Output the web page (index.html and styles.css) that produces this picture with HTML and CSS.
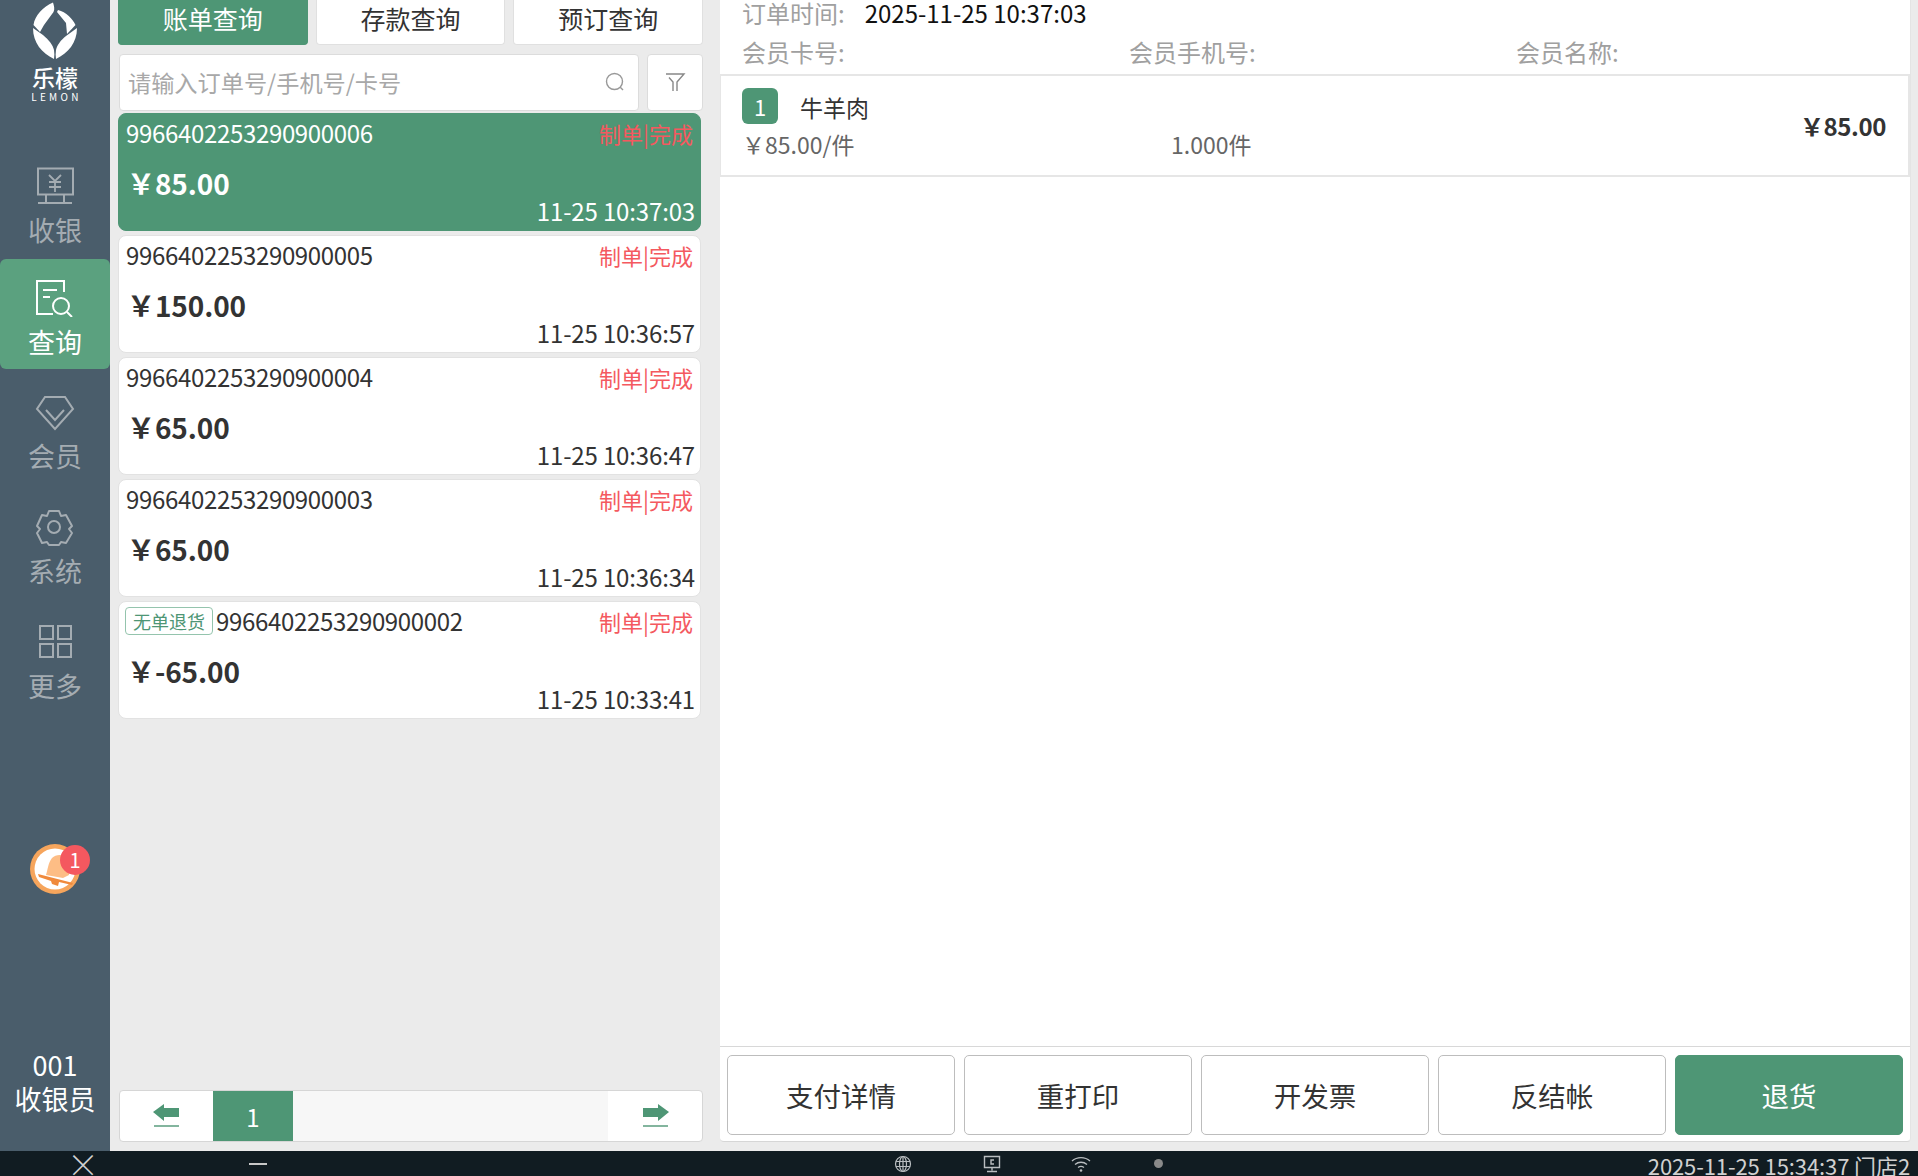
FILE: index.html
```html
<!DOCTYPE html>
<html lang="zh-CN">
<head>
<meta charset="utf-8">
<title>乐檬</title>
<link rel="stylesheet" href="styles.css">
</head>
<body>
<div class="app">
  <div class="main">
    <nav class="side">
      <div class="logo">
        <svg class="logo-mark" viewBox="0 0 44 58" width="44" height="58"><path fill="#fff" d="M20 1.500C21 5 22 8 20.500 11L11 24 7 31 .5 24C2 14 10 6 20 1.500zM25 9C33 11 40 18 42.500 24L34 33 33 22 24 11zM0 27l10 7c6 5 10 10 11 15 .5 3 .5 6 0 9C9 52 0 42 0 27zM44 27C44 42 35 52 23 58c-.5-3-.5-6 0-9 1-5 5-10 10-14z"/></svg>
        <div class="logo-cn">乐檬</div>
        <div class="logo-en">LEMON</div>
      </div>
      <a class="nav-item nav-first">
        <svg viewBox="0 0 40 38" width="40" height="38" fill="none" stroke="#a4acb2" stroke-width="2"><path d="M3 1.500h35v26H3zM11 28v7M29 28v7M3 36h34"/><path d="M14 8l6 6 6-6M14 15h12M14 20h12M20 14v11" stroke-width="1.800"/></svg>
        <span>收银</span>
      </a>
      <a class="nav-item active">
        <svg viewBox="0 0 40 38" width="40" height="38" fill="none" stroke="#fff" stroke-width="2"><path d="M29 13V2H2v33h16M8 11h14M8 18h7"/><circle cx="26" cy="27" r="8"/><path d="M32 33l5 5"/></svg>
        <span>查询</span>
      </a>
      <a class="nav-item nav-after">
        <svg viewBox="0 0 40 36" width="40" height="36" fill="none" stroke="#a4acb2" stroke-width="2"><path d="M10 2h20l8 12-18 20L2 14zM11 15l9 10 9-10"/></svg>
        <span>会员</span>
      </a>
      <a class="nav-item">
        <svg viewBox="0 0 40 38" width="40" height="38" fill="none" stroke="#a4acb2" stroke-width="2"><path d="M14 3h10l2 5 5-1 6 11-3 3 3 4-6 10-5-1-2 3H14l-2-3-5 1-5-10 3-4-3-3L7 7l5 1z" stroke-linejoin="round"/><circle cx="19" cy="19" r="6"/></svg>
        <span>系统</span>
      </a>
      <a class="nav-item">
        <svg viewBox="0 0 40 38" width="40" height="38" fill="none" stroke="#a4acb2" stroke-width="2"><path d="M5 3h13v13H5zM23 3h13v13H23zM5 21h13v13H5zM23 21h13v13H23z"/></svg>
        <span>更多</span>
      </a>
      <div class="bell-wrap">
        <svg class="bell" viewBox="0 0 50 50" width="50" height="50"><circle cx="25" cy="25" r="25" fill="#f6a55c"/><circle cx="25" cy="25" r="20.500" fill="#fff"/><path fill="#fdbd85" d="M16 31c2-6 2-12 6-17 4-4 11-4 15 0 3 4 2 11 2 17l-6 3z"/><path fill="#f08a3c" d="M8 30l35 9-1 2-13-3-1 4-6-2-1-3L9 33z"/></svg>
        <span class="badge">1</span>
      </div>
      <div class="user">
        <div>001</div>
        <div>收银员</div>
      </div>
    </nav>

    <section class="list-col">
      <div class="tabs">
        <div class="tab on">账单查询</div>
        <div class="tab">存款查询</div>
        <div class="tab">预订查询</div>
      </div>
      <div class="search-row">
        <div class="search">
          <span class="placeholder">请输入订单号/手机号/卡号</span>
          <svg viewBox="0 0 22 22" width="22" height="22" fill="none" stroke="#999" stroke-width="1.400"><circle cx="10.500" cy="10.500" r="8"/><path d="M16 16l3 3"/></svg>
        </div>
        <div class="filter">
          <svg viewBox="0 0 22 22" width="22" height="22" fill="none" stroke="#888" stroke-width="1.400"><path d="M2 3h18l-7 8v9M9 20v-9L5 6.500"/></svg>
        </div>
      </div>
      <div class="cards">
        <article class="card sel">
          <div class="card-top"><span class="no">9966402253290900006</span><span class="state">制单|完成</span></div>
          <div class="amount">￥85.00</div>
          <div class="time">11-25 10:37:03</div>
        </article>
        <article class="card">
          <div class="card-top"><span class="no">9966402253290900005</span><span class="state">制单|完成</span></div>
          <div class="amount">￥150.00</div>
          <div class="time">11-25 10:36:57</div>
        </article>
        <article class="card">
          <div class="card-top"><span class="no">9966402253290900004</span><span class="state">制单|完成</span></div>
          <div class="amount">￥65.00</div>
          <div class="time">11-25 10:36:47</div>
        </article>
        <article class="card">
          <div class="card-top"><span class="no">9966402253290900003</span><span class="state">制单|完成</span></div>
          <div class="amount">￥65.00</div>
          <div class="time">11-25 10:36:34</div>
        </article>
        <article class="card">
          <div class="card-top"><span class="no"><em class="tag">无单退货</em>9966402253290900002</span><span class="state">制单|完成</span></div>
          <div class="amount">￥-65.00</div>
          <div class="time">11-25 10:33:41</div>
        </article>
      </div>
      <div class="pager">
        <div class="pg-btn"><svg viewBox="0 0 28 24" width="28" height="24"><path fill="#4e9675" d="M0 8L11 0v4h15v9H11v4z"/><path fill="#4e9675" d="M1 21h25v2H1z" opacity=".7"/></svg></div>
        <div class="pg-num">1</div>
        <div class="pg-fill"></div>
        <div class="pg-btn"><svg viewBox="0 0 28 24" width="28" height="24"><path fill="#4e9675" d="M28 8L17 0v4H2v9h15v4z"/><path fill="#4e9675" d="M2 21h25v2H2z" opacity=".7"/></svg></div>
      </div>
    </section>

    <section class="detail">
      <div class="info">
        <div class="info-row first"><span class="lab">订单时间:</span><span class="val">2025-11-25 10:37:03</span></div>
        <div class="info-row cols"><span class="lab">会员卡号:</span><span class="lab">会员手机号:</span><span class="lab">会员名称:</span></div>
      </div>
      <div class="item">
        <div class="item-l">
          <div class="item-name"><span class="idx">1</span><span class="nm">牛羊肉</span></div>
          <div class="item-sub"><span class="pr">￥85.00/件</span><span class="qty">1.000件</span></div>
        </div>
        <div class="item-total">￥85.00</div>
      </div>
      <div class="spacer"></div>
      <div class="actions">
        <button class="act">支付详情</button>
        <button class="act">重打印</button>
        <button class="act">开发票</button>
        <button class="act">反结帐</button>
        <button class="act primary">退货</button>
      </div>
    </section>
  </div>

  <footer class="status">
    <span class="st-x">×</span>
    <span class="st-min"></span>
    <svg class="st-globe" viewBox="0 0 18 18" width="18" height="18" fill="none" stroke="#b9bdc0" stroke-width="1.200"><circle cx="9" cy="9" r="7.500"/><ellipse cx="9" cy="9" rx="3.500" ry="7.500"/><path d="M9 1.500v15M2 6.500h14M2 11.500h14"/></svg>
    <svg class="st-pc" viewBox="0 0 18 18" width="18" height="18" fill="none" stroke="#b9bdc0" stroke-width="1.400"><path d="M1.500 1.500h15v11h-15zM9 12.500v3M4 16.500h10M11 5H8v4h3"/></svg>
    <svg class="st-wifi" viewBox="0 0 20 18" width="20" height="18" fill="none" stroke="#b9bdc0" stroke-width="1.300"><path d="M1 6c5-4.500 13-4.500 18 0M4 9.500c3.500-3 8.500-3 12 0M7 12.500c2-1.500 4-1.500 6 0"/><circle cx="10" cy="15.500" r="1.300" fill="#b9bdc0" stroke="none"/></svg>
    <span class="st-dot"></span>
    <span class="st-right">2025-11-25 15:34:37 门店2</span>
  </footer>
</div>
</body>
</html>
```
FILE: styles.css
```css
* { box-sizing: border-box; }
html, body { margin: 0; padding: 0; height: 100%; overflow: hidden; }
body { font-family: "Noto Sans CJK SC", "Noto Sans", sans-serif; color: #333; background: #ebebeb; }
.app { width: 1918px; height: 1176px; display: flex; flex-direction: column; overflow: hidden; }
.main { flex: 1; display: flex; min-height: 0; }

.side { width: 110px; flex: none; background: #4a5d6b; display: flex; flex-direction: column; align-items: stretch; }
.logo { height: 102px; display: flex; flex-direction: column; align-items: center; color: #fff; padding-top: 1px; flex: none; }
.logo-mark { display: block; flex: none; }
.logo-cn { font-size: 23px; line-height: 24px; margin-top: 6px; font-weight: 500; }
.logo-en { font-size: 10px; line-height: 10px; letter-spacing: 3.300px; margin-right: -3px; margin-top: 3px; }
.nav-item { height: 114.500px; flex: none; display: flex; flex-direction: column; align-items: center; justify-content: center; gap: 7px; color: #a4acb2; font-size: 27px; line-height: 36px; }
.nav-first { height: 110px; margin-top: 47px; padding-top: 6px; }
.nav-item.active { height: 110px; background: #5ba17f; color: #fff; border-radius: 6px; padding-top: 11px; }
.nav-after { margin-top: 8px; }
.bell-wrap { position: relative; width: 50px; height: 50px; margin: 123px 0 0 30px; flex: none; }
.badge { position: absolute; top: 1px; right: -10px; width: 30px; height: 30px; border-radius: 50%; background: #f4585f; color: #fff; font-size: 20px; line-height: 30px; text-align: center; }
.user { margin-top: auto; color: #fff; font-size: 27px; line-height: 34px; text-align: center; padding-bottom: 35px; }

.list-col { width: 610px; flex: none; display: flex; flex-direction: column; padding: 0 0 9px 9px; }
.tabs { display: flex; gap: 9px; height: 45px; flex: none; width: 584px; }
.tab { flex: 1; background: #fff; border: 1px solid #e0e0e0; border-top: 0; border-radius: 0 0 4px 4px; display: flex; align-items: center; justify-content: center; font-size: 25px; color: #333; padding-bottom: 8px; margin-left: -1px; }
.tab.on { background: #4e9675; border-color: #4e9675; color: #fff; }
.search-row { display: flex; gap: 8px; margin-top: 9px; height: 57px; width: 584px; flex: none; }
.search { flex: 1; background: #fff; border: 1px solid #dcdcdc; border-radius: 4px; display: flex; align-items: center; justify-content: space-between; padding: 0 12px 2px 8px; }
.placeholder { font-size: 23.200px; color: #a8a8a8; }
.filter { width: 56px; background: #fff; border: 1px solid #dcdcdc; border-radius: 4px; display: flex; align-items: center; justify-content: center; padding-bottom: 2px; }
.cards { display: flex; flex-direction: column; gap: 4px; margin-top: 2px; width: 583px; margin-left: -1px; flex: 1; }
.card { height: 118px; flex: none; background: #fff; border: 1px solid #e2e2e2; border-radius: 8px; padding: 0 7px 0 7px; position: relative; }
.card.sel { background: #4e9675; border-color: #4e9675; color: #fff; }
.card-top { display: flex; justify-content: space-between; align-items: center; height: 36px; }
.no { font-size: 24px; letter-spacing: -0.330px; display: flex; align-items: center; }
.state { font-size: 22px; color: #f4595f; margin-top: 2px; }
.tag { font-style: normal; font-size: 18px; line-height: 26px; color: #4e9675; border: 1px solid #94c4ad; border-radius: 4px; padding: 0 7px; margin: 1px 3px 0 -1px; letter-spacing: 0; }
.amount { font-size: 28px; font-weight: 700; line-height: 38px; margin-top: 14px; margin-left: 1px; letter-spacing: -0.100px; }
.time { position: absolute; right: 5px; bottom: 3px; font-size: 24px; line-height: 32px; letter-spacing: -0.150px; }
.pager { height: 52px; flex: none; width: 584px; display: flex; background: #fff; border: 1px solid #d6d6d6; border-radius: 4px; overflow: hidden; }
.pg-btn { width: 94px; flex: none; display: flex; align-items: center; justify-content: center; }
.pg-btn:first-child { width: 93px; }
.pg-num { width: 80px; flex: none; background: #4e9675; color: #fff; font-size: 24px; display: flex; align-items: center; justify-content: center; }
.pg-fill { flex: 1; background: #f7f7f7; }

.detail { width: 1191px; flex: none; background: #fff; display: flex; flex-direction: column; margin-bottom: 9px; border-right: 1px solid #e4e4e4; border-bottom: 1px solid #d6d6d6; border-radius: 0 0 4px 4px; }
.info { height: 74px; flex: none; padding-left: 22px; }
.info-row { display: flex; font-size: 24px; line-height: 34px; }
.info-row.first { margin-top: -4px; height: 39px; }
.lab { color: #a0a0a0; }
.val { color: #111; margin-left: 20px; }
.info-row.cols .lab { width: 387px; flex: none; }
.item { height: 103px; flex: none; border: 2px solid #e6e6e6; border-left-width: 1px; display: flex; align-items: center; justify-content: space-between; padding: 0 22px 0 21px; width: 1190px; }
.item-l { flex: 1; }
.item-name { display: flex; align-items: center; height: 38px; margin-top: -3px; }
.idx { width: 36px; height: 36px; background: #4e9675; color: #fff; border-radius: 6px; display: flex; align-items: center; justify-content: center; font-size: 22px; }
.nm { font-size: 23px; margin-left: 22px; color: #333; padding-top: 2px; }
.item-sub { display: flex; font-size: 23px; color: #666; height: 34px; line-height: 34px; margin-top: 2px; }
.pr { width: 429px; flex: none; }
.item-total { font-size: 24px; font-weight: 700; color: #333; letter-spacing: -0.400px; }
.spacer { flex: 1; }
.actions { height: 95px; flex: none; border-top: 1px solid #d8d8d8; display: flex; gap: 9px; padding: 8px 7px 6px 7px; }
.act { flex: 1; background: #fff; border: 1px solid #bdbdbd; border-radius: 5px; font: inherit; font-size: 27.500px; color: #333; padding: 0; }
.act.primary { background: #4e9675; border-color: #4e9675; color: #fff; }

.status { height: 25px; flex: none; background: #111c22; display: flex; align-items: center; color: #d0d0d0; position: relative; padding-right: 8px; overflow: hidden; }
.status svg { flex: none; }
.st-x { margin-left: 67px; font-size: 32px; line-height: 25px; font-weight: 300; width: 24px; text-align: center; }
.st-min { width: 18px; height: 2px; background: #c8c8c8; margin-left: 158px; flex: none; }
.st-globe { margin-left: 627px; }
.st-pc { margin-left: 71px; }
.st-wifi { margin-left: 70px; }
.st-dot { width: 9px; height: 9px; border-radius: 50%; background: #8a8a8a; margin-left: 63px; flex: none; }
.st-right { margin-left: auto; font-size: 22px; line-height: 25px; white-space: nowrap; padding-top: 4px; letter-spacing: -0.100px; }
```
